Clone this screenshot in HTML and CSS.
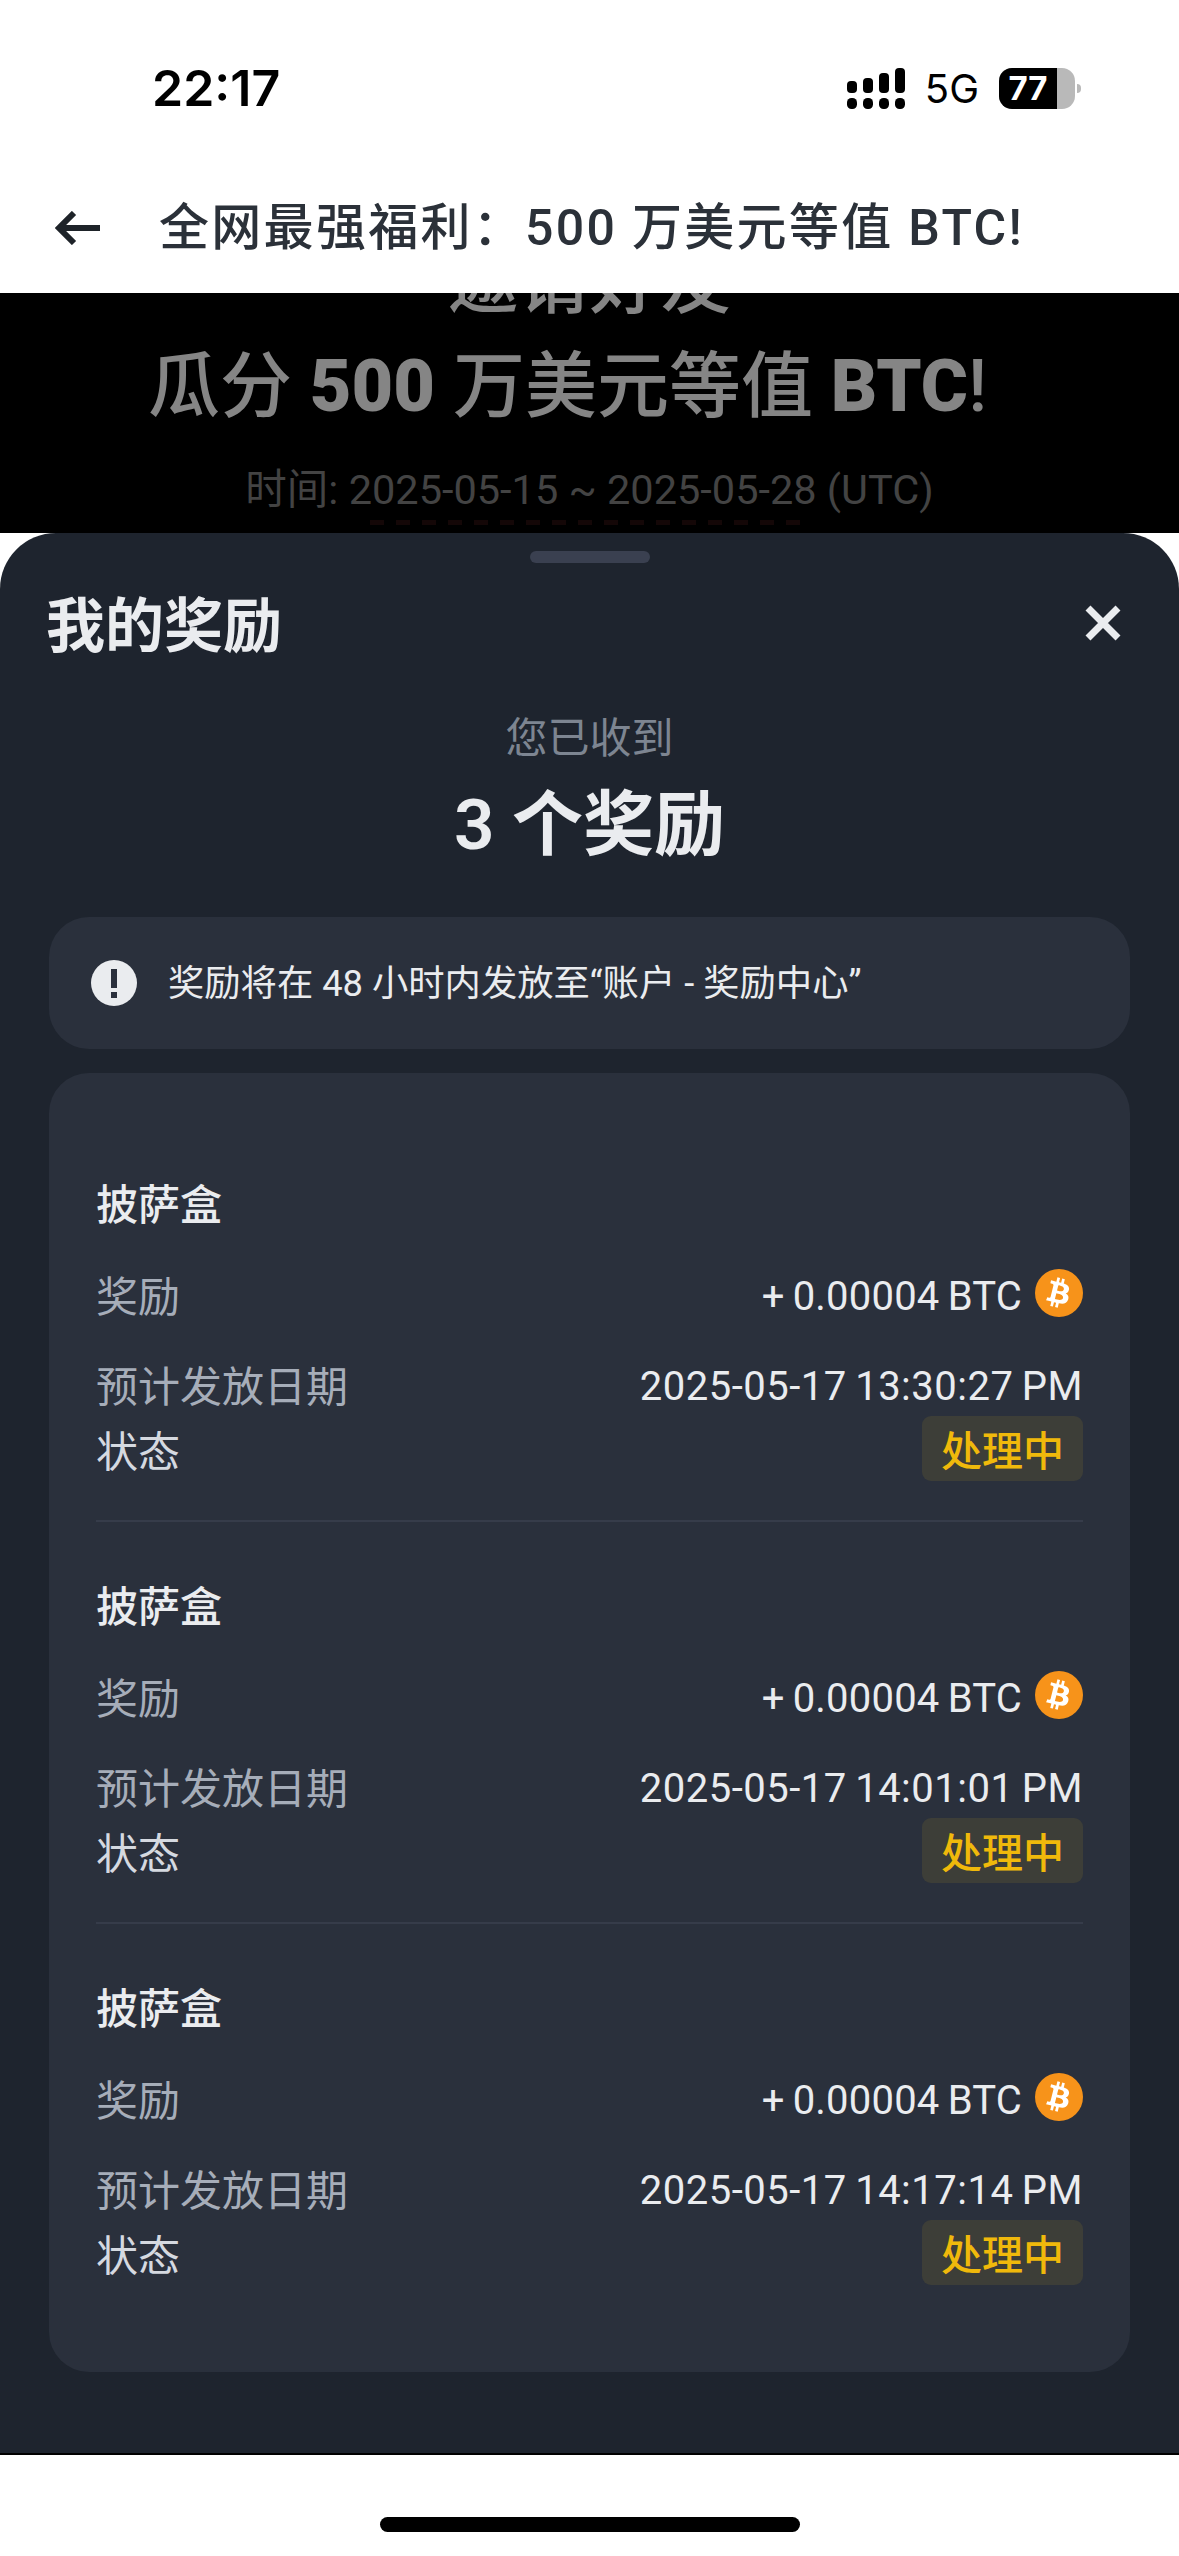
FILE: index.html
```html
<!DOCTYPE html>
<html>

<head>
    <title>我的奖励</title>
    <meta charset="utf-8">
    <link rel="stylesheet" href="styles.css">
</head>

<body>
    <svg class="defs" width="0" height="0">
        <symbol id="btc" viewBox="0 0 24 24">
            <circle cx="12" cy="12" r="12" fill="#f7931a"></circle>
            <path fill="#fff" d="M17.017 10.27c.24-1.59-.974-2.45-2.64-3.03l.54-2.153-1.315-.33-.525 2.107c-.345-.087-.705-.167-1.064-.25l.526-2.127-1.32-.33-.54 2.165c-.285-.067-.565-.132-.84-.2l-1.815-.45-.35 1.407s.975.225.955.236c.535.136.63.486.615.766l-1.477 5.92c-.075.166-.24.406-.614.314.015.02-.96-.24-.96-.24l-.66 1.51 1.71.426.93.242-.54 2.19 1.32.327.54-2.17c.36.1.705.19 1.05.273l-.51 2.154 1.32.33.545-2.19c2.24.427 3.93.257 4.64-1.774.57-1.637-.03-2.58-1.217-3.196.854-.193 1.5-.76 1.68-1.93h.01zm-3.01 4.22c-.404 1.64-3.157.75-4.05.53l.72-2.9c.896.23 3.757.67 3.33 2.37zm.41-4.24c-.37 1.49-2.662.735-3.405.55l.654-2.64c.744.18 3.137.524 2.75 2.084v.006z"></path>
        </symbol>
    </svg>

    <div id="tela">
        <div class="status">
            <span class="hora">22:17</span>
            <div class="status-dir">
                <svg class="sinal" viewBox="0 0 58 41" width="58" height="41">
                    <rect x="0" y="13" width="10" height="12" rx="4"></rect>
                    <rect x="16" y="10" width="10" height="15" rx="4"></rect>
                    <rect x="32" y="5" width="10" height="20" rx="4"></rect>
                    <rect x="48" y="0" width="10" height="25" rx="4"></rect>
                    <rect x="0" y="30" width="10" height="11" rx="4.5"></rect>
                    <rect x="16" y="30" width="10" height="11" rx="4.5"></rect>
                    <rect x="32" y="30" width="10" height="11" rx="4.5"></rect>
                    <rect x="48" y="30" width="10" height="11" rx="4.5"></rect>
                </svg>
                <span class="rede">5G</span>
                <div class="bateria">
                    <div class="bateria-corpo"><span class="bateria-cheia">77</span></div>
                    <div class="bateria-ponta"></div>
                </div>
            </div>
        </div>

        <div class="nav">
            <svg class="voltar" viewBox="0 0 46 34" width="46" height="34">
                <path d="M45 17H4M19 2 4 17l15 15" fill="none" stroke="#1e2329" stroke-width="6"></path>
            </svg>
            <span class="nav-titulo">全网最强福利：500 万美元等值 BTC!</span>
        </div>

        <div class="fundo">
            <div class="fundo-l1">邀请好友</div>
            <div class="fundo-l2">瓜分 <b>500</b> 万美元等值 <b>BTC</b>!</div>
            <div class="fundo-l3">时间: 2025-05-15 ~ 2025-05-28 (UTC)</div>
            <div class="fundo-l4"></div>
        </div>

        <div class="sheet">
            <div class="alca"></div>
            <div class="sheet-topo">
                <span class="sheet-titulo">我的奖励</span>
                <svg class="fechar" viewBox="0 0 38 38" width="38" height="38">
                    <path d="M4 4l30 30M34 4 4 34" fill="none" stroke="#eaecef" stroke-width="7"></path>
                </svg>
            </div>

            <div class="recebido">您已收到</div>
            <div class="total">3 个奖励</div>

            <div class="aviso">
                <svg class="aviso-icone" viewBox="0 0 46 46" width="46" height="46">
                    <circle cx="23" cy="23" r="23" fill="#eaecef"></circle>
                    <rect x="20" y="9" width="6" height="19" fill="#2a303c"></rect>
                    <rect x="20" y="32" width="6" height="6" fill="#2a303c"></rect>
                </svg>
                <span class="aviso-texto">奖励将在 48 小时内发放至“账户 - 奖励中心”</span>
            </div>

            <div class="lista">
                <div class="item">
                    <div class="item-nome">披萨盒</div>
                    <div class="linha espaco">
                        <span class="rotulo">奖励</span>
                        <span class="valor premio">+ 0.00004 BTC<svg class="moeda" width="48" height="48"><use href="#btc"></use></svg></span>
                    </div>
                    <div class="linha espaco">
                        <span class="rotulo">预计发放日期</span>
                        <span class="valor">2025-05-17 13:30:27 PM</span>
                    </div>
                    <div class="linha linha-estado">
                        <span class="rotulo claro">状态</span>
                        <span class="estado">处理中</span>
                    </div>
                </div>

                <div class="item">
                    <div class="item-nome">披萨盒</div>
                    <div class="linha espaco">
                        <span class="rotulo">奖励</span>
                        <span class="valor premio">+ 0.00004 BTC<svg class="moeda" width="48" height="48"><use href="#btc"></use></svg></span>
                    </div>
                    <div class="linha espaco">
                        <span class="rotulo">预计发放日期</span>
                        <span class="valor">2025-05-17 14:01:01 PM</span>
                    </div>
                    <div class="linha linha-estado">
                        <span class="rotulo claro">状态</span>
                        <span class="estado">处理中</span>
                    </div>
                </div>

                <div class="item">
                    <div class="item-nome">披萨盒</div>
                    <div class="linha espaco">
                        <span class="rotulo">奖励</span>
                        <span class="valor premio">+ 0.00004 BTC<svg class="moeda" width="48" height="48"><use href="#btc"></use></svg></span>
                    </div>
                    <div class="linha espaco">
                        <span class="rotulo">预计发放日期</span>
                        <span class="valor">2025-05-17 14:17:14 PM</span>
                    </div>
                    <div class="linha linha-estado">
                        <span class="rotulo claro">状态</span>
                        <span class="estado">处理中</span>
                    </div>
                </div>
            </div>
        </div>

        <div class="rodape">
            <div class="home"></div>
        </div>
    </div>
</body>

</html>
```

FILE: styles.css
```css
body {
    margin: 0;
    background-color: #fff;
    font-family: Roboto, "Noto Sans CJK SC", sans-serif;
}

.defs {
    display: block;
    height: 0;
}

#tela {
    width: 1179px;
    height: 2556px;
    display: flex;
    flex-direction: column;
    overflow: hidden;
}

/* barra de status */
.status {
    height: 176px;
    box-sizing: border-box;
    padding: 0 98px 0 152px;
    display: flex;
    align-items: center;
    justify-content: space-between;
    color: #000;
}

.hora {
    font-family: Inter, sans-serif;
    font-size: 50px;
    font-weight: 600;
    line-height: 60px;
}

.status-dir {
    display: flex;
    align-items: center;
}

.rede {
    margin-left: 20px;
    font-family: Inter, sans-serif;
    font-size: 40px;
    line-height: 41px;
}

.bateria {
    margin-left: 20px;
    display: flex;
    align-items: center;
}

.bateria-corpo {
    width: 76px;
    height: 41px;
    border-radius: 13px;
    overflow: hidden;
    background-color: #b9b9b9;
}

.bateria-cheia {
    display: block;
    width: 58px;
    height: 41px;
    background-color: #000;
    color: #fff;
    font-family: Inter, sans-serif;
    font-size: 33px;
    font-weight: 700;
    line-height: 41px;
    text-align: center;
}

.bateria-ponta {
    margin-left: 2px;
    width: 4px;
    height: 9px;
    border-radius: 0 5px 5px 0;
    background-color: #b9b9b9;
}

/* cabecalho */
.nav {
    height: 117px;
    box-sizing: border-box;
    padding: 0 0 14px 55px;
    display: flex;
    align-items: center;
    gap: 58px;
}

.nav-titulo {
    font-size: 50px;
    font-weight: 500;
    line-height: 60px;
    letter-spacing: 2.3px;
    color: #2b3139;
    white-space: nowrap;
}

/* pagina atras do sheet */
.fundo {
    height: 240px;
    background-color: #000;
    overflow: hidden;
    text-align: center;
    color: #858585;
}

.fundo-l1 {
    margin-top: -50px;
    font-size: 71px;
    font-weight: 500;
    line-height: 80px;
}

.fundo-l2 {
    margin-top: 24px;
    padding-right: 44px;
    font-size: 72px;
    font-weight: 500;
    line-height: 80px;
    white-space: nowrap;
}

.fundo-l2 b {
    font-weight: 900;
}

.fundo-l3 {
    margin-top: 38px;
    font-size: 41.5px;
    line-height: 50px;
    color: #434343;
    white-space: nowrap;
}

.fundo-l4 {
    width: 440px;
    height: 5px;
    margin: 5px auto 0;
    background: repeating-linear-gradient(90deg, #140707 0 14px, #000 14px 26px);
}

/* sheet */
.sheet {
    flex: 1;
    box-sizing: border-box;
    padding: 18px 49px 0;
    background-color: #1e242e;
    border-radius: 56px 56px 0 0;
    border-bottom: 2px solid #000;
}

.alca {
    width: 120px;
    height: 12px;
    margin: 0 auto;
    border-radius: 6px;
    background-color: #3a4050;
}

.sheet-topo {
    height: 72px;
    margin-top: 27px;
    display: flex;
    align-items: center;
    justify-content: space-between;
}

.sheet-titulo {
    margin-left: -3px;
    padding-top: 2px;
    font-size: 59px;
    font-weight: 600;
    line-height: 72px;
    color: #eaecef;
}

.fechar {
    margin: 0 8px 6px 0;
}

.recebido {
    margin-top: 47px;
    font-size: 42px;
    line-height: 60px;
    text-align: center;
    color: #7d8591;
}

.total {
    margin-top: 13px;
    font-size: 71px;
    font-weight: 600;
    line-height: 86px;
    text-align: center;
    color: #eaecef;
}

.aviso {
    height: 132px;
    box-sizing: border-box;
    margin-top: 49px;
    padding-left: 42px;
    display: flex;
    align-items: center;
    gap: 31px;
    border-radius: 40px;
    background-color: #2a303c;
    font-size: 36.3px;
    color: #eaecef;
}

.aviso-texto {
    padding-bottom: 6px;
}

.lista {
    margin-top: 24px;
    padding: 47px 47px 87px;
    border-radius: 40px;
    background-color: #2a303c;
}

.item {
    padding: 56px 0 39px;
    border-bottom: 2px solid #363c4a;
}

.item:last-child {
    padding-bottom: 0;
    border-bottom: none;
}

.item-nome {
    font-size: 42px;
    font-weight: 500;
    line-height: 60px;
    color: #eaecef;
}

.linha {
    height: 60px;
    display: flex;
    align-items: center;
    justify-content: space-between;
}

.espaco {
    margin-top: 30px;
}

.linha-estado {
    height: 65px;
}

.rotulo {
    padding-bottom: 6px;
    font-size: 42px;
    color: #a6adb9;
}

.claro {
    padding-bottom: 0;
    color: #d5d9e0;
}

.valor {
    display: flex;
    align-items: center;
    font-size: 40px;
    letter-spacing: 0.5px;
    word-spacing: -2px;
    color: #eaecef;
}

.premio {
    letter-spacing: 0.2px;
}

.moeda {
    margin: 0 0 6px 13px;
}

.estado {
    width: 161px;
    height: 65px;
    border-radius: 9px;
    background-color: #3d3e38;
    font-size: 41px;
    font-weight: 500;
    line-height: 72px;
    text-align: center;
    color: #f0b90b;
}

/* rodape */
.rodape {
    height: 101px;
    box-sizing: border-box;
    padding-top: 62px;
}

.home {
    width: 420px;
    height: 15px;
    margin: 0 auto;
    border-radius: 8px;
    background-color: #000;
}
```
